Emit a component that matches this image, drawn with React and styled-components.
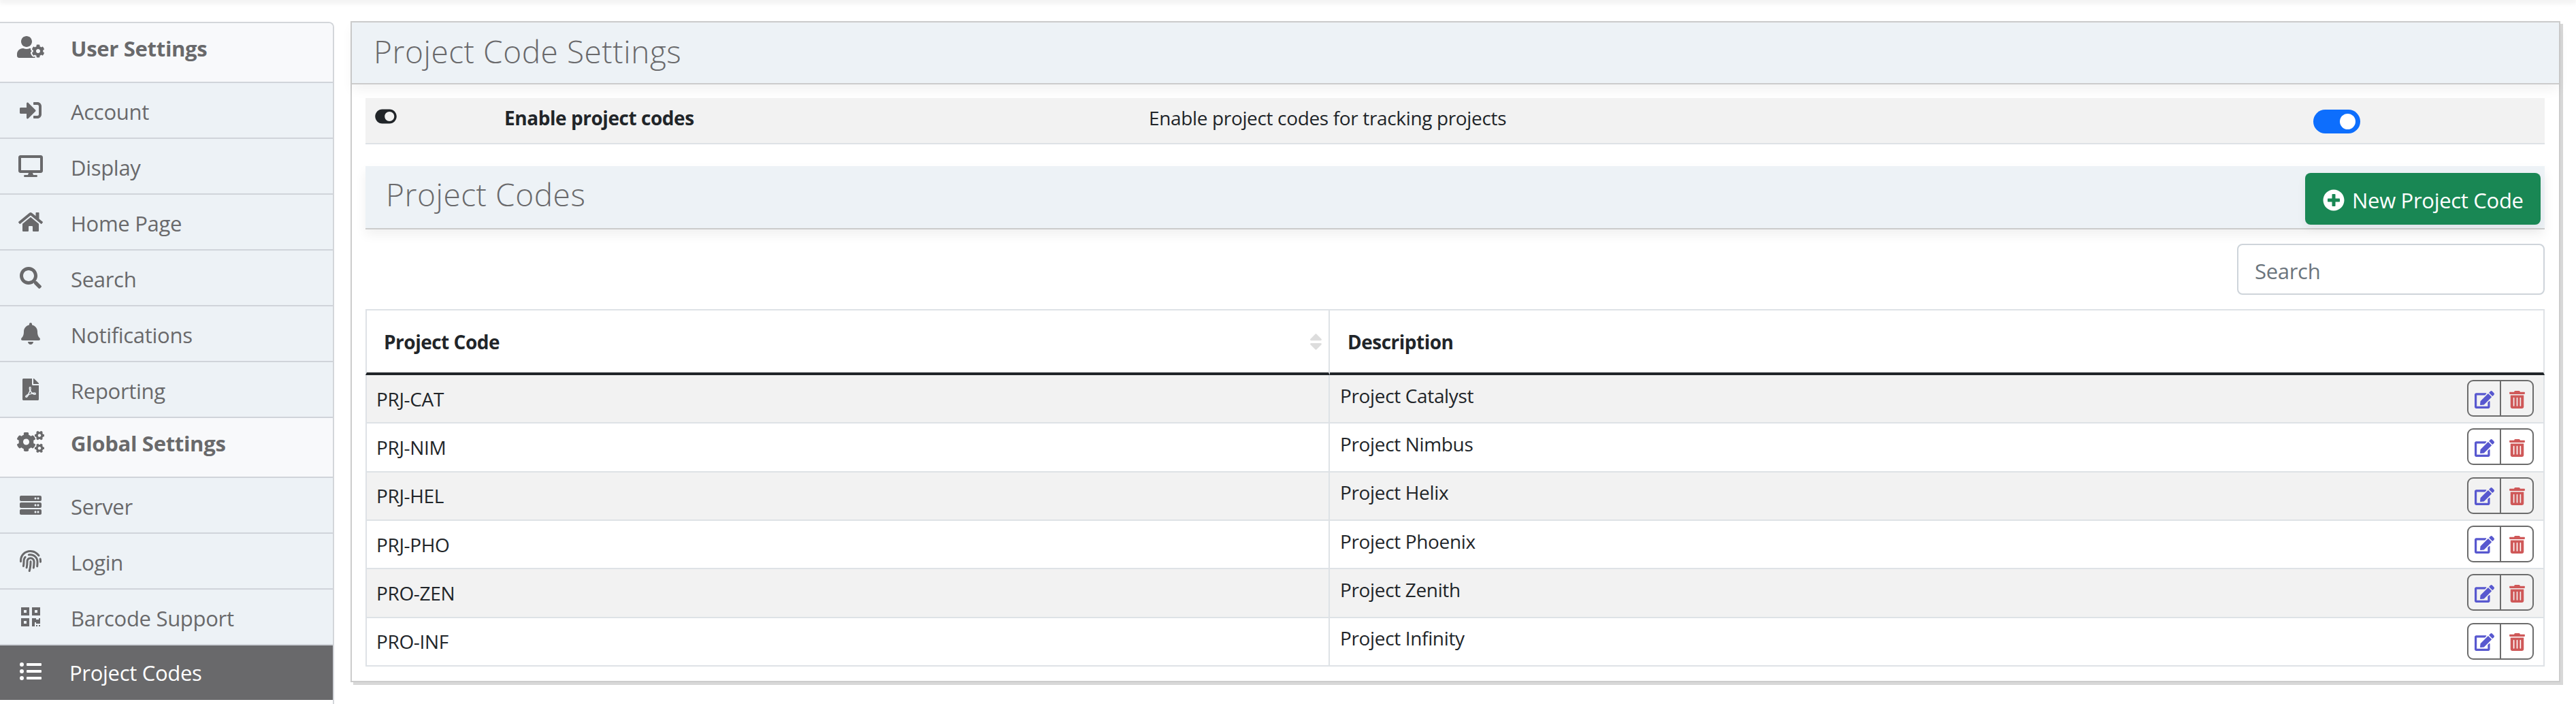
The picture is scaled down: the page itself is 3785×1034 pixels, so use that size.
import React from 'react'
import styled, { createGlobalStyle } from 'styled-components'
import {
    FaUserCog, FaSignInAlt, FaDesktop, FaHome, FaSearch, FaBell, FaFilePdf, FaCogs, FaServer,
    FaFingerprint, FaQrcode, FaListUl, FaToggleOn, FaPlusCircle, FaSort, FaEdit, FaTrashAlt,
} from 'react-icons/fa'

const GlobalStyle = createGlobalStyle`
    html, body {
        margin: 0;
        padding: 0;
        background: #fff;
        overflow: hidden;
    }
    body {
        font-family: "Open Sans", "Noto Sans", sans-serif;
        color: #212529;
    }
`

const Page = styled.div`
    width: 3785px;
    height: 1034px;
    overflow: hidden;
    position: relative;
    display: flex;
    flex-direction: column;
`

const TopShadow = styled.div`
    height: 0;
    flex: none;
    box-shadow: 0 0 10px 2px rgba(0, 0, 0, 0.14);
`

const Columns = styled.div`
    display: flex;
    align-items: flex-start;
    gap: 24px;
    padding-top: 32px;
`

const Sidebar = styled.nav`
    width: 491px;
    height: 1002px;
    flex: none;
    box-sizing: border-box;
    border-top: 2px solid #d3d6da;
    border-right: 2px solid #d3d6da;
    border-top-right-radius: 8px;
    overflow: hidden;
`

const SideRow = styled.div`
    display: flex;
    align-items: center;
    box-sizing: border-box;
    height: ${(p) => (p.$group ? 88 : p.$active ? 80 : 82)}px;
    padding-top: ${(p) => (p.$group || p.$active ? 0 : 4)}px;
    padding-bottom: ${(p) => (p.$group ? 12 : 0)}px;
    padding-left: 25px;
    background: ${(p) => (p.$active ? '#69696b' : p.$group ? '#f8f9fb' : '#edf2f6')};
    color: ${(p) => (p.$active ? '#fff' : '#69696b')};
    border-bottom: ${(p) => (p.$active ? 'none' : '2px solid #d0d4da')};
    font-size: 31px;
    letter-spacing: -0.3px;
    font-weight: ${(p) => (p.$group ? 700 : 400)};
`

const SideIcon = styled.span`
    display: flex;
    justify-content: center;
    width: 40px;
    margin-right: ${(p) => (p.$active ? 37 : 39)}px;
    flex: none;
    position: relative;
    top: -2px;
    svg {
        height: 32px;
        width: ${(p) => p.$width}px;
        flex: none;
    }
`

const Panel = styled.main`
    width: 3247px;
    flex: none;
    margin-top: -1px;
    box-sizing: border-box;
    border: 2px solid #cccccc;
    box-shadow: 4px 4px 0 #d8d8d8;
    background: #fff;
    padding-bottom: 21px;
`

const PanelHeader = styled.header`
    box-sizing: border-box;
    height: 91px;
    padding: 0 0 6px 32px;
    display: flex;
    align-items: center;
    background: #edf2f6;
    border-bottom: 2px solid #cccccc;
    box-shadow: 0 8px 16px rgba(0, 0, 0, 0.05);
    font-size: 46px;
    font-weight: 300;
    letter-spacing: 0.55px;
    color: #69696b;
`

const PanelBody = styled.div`
    padding: 20px 21px 0 20px;
`

const SettingRow = styled.div`
    display: grid;
    grid-template-columns: 190px 947px 1711px 1fr;
    align-items: center;
    box-sizing: border-box;
    height: 68px;
    padding-left: 14px;
    padding-bottom: 8px;
    background: #f2f2f2;
    border-bottom: 2px solid #dee2e6;
    font-size: 28px;
    letter-spacing: -0.35px;
`

const SettingIcon = styled.span`
    display: flex;
    position: relative;
    top: -2px;
    svg {
        height: 28px;
        width: 32px;
    }
`

const SettingName = styled.strong`
    font-weight: 700;
    letter-spacing: -0.45px;
`

const Switch = styled.span`
    display: block;
    position: relative;
    width: 69px;
    height: 35px;
    border-radius: 18px;
    background: #0d6efd;
    top: 5px;
    &::after {
        content: '';
        position: absolute;
        top: 6px;
        right: 7px;
        width: 23px;
        height: 23px;
        border-radius: 50%;
        background: #fff;
    }
`

const SectionHeader = styled.div`
    box-sizing: border-box;
    height: 93px;
    margin-top: 32px;
    padding: 10px 6px 0 30px;
    display: flex;
    align-items: flex-start;
    justify-content: space-between;
    background: #edf2f6;
    border-bottom: 2px solid #cccccc;
    box-shadow: 0 8px 16px rgba(0, 0, 0, 0.06);
`

const SectionTitle = styled.h2`
    margin: 0;
    font-size: 46px;
    line-height: 62px;
    font-weight: 300;
    letter-spacing: 0.55px;
    color: #69696b;
`

const NewButton = styled.button`
    display: flex;
    align-items: center;
    gap: 11px;
    box-sizing: border-box;
    width: 346px;
    height: 76px;
    padding: 3px 0 0 26px;
    border: none;
    border-radius: 8px;
    background: #198754;
    color: #fff;
    font-family: inherit;
    font-size: 31px;
    letter-spacing: -0.3px;
    box-shadow: 0 6px 14px rgba(0, 0, 0, 0.06);
    svg {
        width: 32px;
        height: 32px;
        flex: none;
    }
`

const SearchRow = styled.div`
    display: flex;
    justify-content: flex-end;
    margin: 21px 0;
`

const SearchInput = styled.input`
    box-sizing: border-box;
    width: 452px;
    height: 75px;
    padding: 5px 24px 0;
    border: 2px solid #ced4da;
    border-radius: 8px;
    font-family: inherit;
    font-size: 31px;
    letter-spacing: -0.3px;
    &::placeholder {
        color: #6c757d;
        opacity: 1;
    }
`

const Table = styled.table`
    width: 100%;
    table-layout: fixed;
    border-collapse: separate;
    border-spacing: 0;
    border-top: 2px solid #dee2e6;
    font-size: 28px;
    letter-spacing: -0.35px;
`

const HeadCell = styled.th`
    position: relative;
    box-sizing: border-box;
    height: 95px;
    width: ${(p) => p.$width || 'auto'};
    padding: 0 26px 0 ${(p) => (p.$first ? 25 : 26)}px;
    text-align: left;
    font-weight: 700;
    letter-spacing: -0.5px;
    border-bottom: 4px solid #212529;
    border-left: ${(p) => (p.$first ? '2px solid #dee2e6' : 'none')};
    border-right: 2px solid #dee2e6;
`

const SortIcon = styled(FaSort)`
    position: absolute;
    right: 9px;
    top: 31px;
    height: 30px;
    width: 19px;
    color: #dddddd;
`

const Row = styled.tr`
    background: ${(p) => (p.$striped ? '#f2f2f2' : '#fff')};
`

const Cell = styled.td`
    position: relative;
    box-sizing: border-box;
    height: 71.33px;
    padding: 0 14px ${(p) => (p.$raised ? 10 : 0)}px ${(p) => (p.$raised ? 15 : 14)}px;
    border-bottom: 2px solid #dee2e6;
    border-left: ${(p) => (p.$first ? '2px solid #dee2e6' : 'none')};
    border-right: 2px solid #dee2e6;
`

const Actions = styled.div`
    position: absolute;
    right: 14px;
    top: 7px;
    display: flex;
    width: 98px;
    height: 54px;
    box-sizing: border-box;
    border: 2px solid #6c6c6c;
    border-radius: 9px;
    overflow: hidden;
`

const ActionButton = styled.span`
    flex: 1;
    display: flex;
    align-items: center;
    justify-content: center;
    padding-top: 3px;
    color: ${(p) => p.$color};
    border-left: ${(p) => (p.$divided ? '2px solid #6c6c6c' : 'none')};
    svg {
        height: 26px;
        width: ${(p) => p.$width}px;
        flex: none;
    }
`

const menu = [
    { label: 'User Settings', icon: FaUserCog, width: 40, group: true },
    { label: 'Account', icon: FaSignInAlt, width: 32 },
    { label: 'Display', icon: FaDesktop, width: 36 },
    { label: 'Home Page', icon: FaHome, width: 36 },
    { label: 'Search', icon: FaSearch, width: 32 },
    { label: 'Notifications', icon: FaBell, width: 28 },
    { label: 'Reporting', icon: FaFilePdf, width: 24 },
    { label: 'Global Settings', icon: FaCogs, width: 40, group: true },
    { label: 'Server', icon: FaServer, width: 32 },
    { label: 'Login', icon: FaFingerprint, width: 32 },
    { label: 'Barcode Support', icon: FaQrcode, width: 28 },
    { label: 'Project Codes', icon: FaListUl, width: 32, active: true },
]

const codes = [
    ['PRJ-CAT', 'Project Catalyst'],
    ['PRJ-NIM', 'Project Nimbus'],
    ['PRJ-HEL', 'Project Helix'],
    ['PRJ-PHO', 'Project Phoenix'],
    ['PRO-ZEN', 'Project Zenith'],
    ['PRO-INF', 'Project Infinity'],
]

const App = () => (
    <Page>
        <GlobalStyle />
        <TopShadow />
        <Columns>
            <Sidebar>
                {menu.map(({ label, icon: Icon, width, group, active }) => (
                    <SideRow key={label} $group={group} $active={active}>
                        <SideIcon $active={active} $width={width}><Icon /></SideIcon>
                        {label}
                    </SideRow>
                ))}
            </Sidebar>
            <Panel>
                <PanelHeader>Project Code Settings</PanelHeader>
                <PanelBody>
                    <SettingRow>
                        <SettingIcon><FaToggleOn /></SettingIcon>
                        <SettingName>Enable project codes</SettingName>
                        <span>Enable project codes for tracking projects</span>
                        <Switch />
                    </SettingRow>
                    <SectionHeader>
                        <SectionTitle>Project Codes</SectionTitle>
                        <NewButton><FaPlusCircle />New Project Code</NewButton>
                    </SectionHeader>
                    <SearchRow>
                        <SearchInput placeholder="Search" />
                    </SearchRow>
                    <Table>
                        <thead>
                            <tr>
                                <HeadCell $first $width="1417px">Project Code<SortIcon /></HeadCell>
                                <HeadCell>Description</HeadCell>
                            </tr>
                        </thead>
                        <tbody>
                            {codes.map(([code, description], i) => (
                                <Row key={code} $striped={i % 2 === 0}>
                                    <Cell $first>{code}</Cell>
                                    <Cell $raised>
                                        {description}
                                        <Actions>
                                            <ActionButton $color="#5858cf" $width={29}><FaEdit /></ActionButton>
                                            <ActionButton $color="#cf5858" $width={23} $divided><FaTrashAlt /></ActionButton>
                                        </Actions>
                                    </Cell>
                                </Row>
                            ))}
                        </tbody>
                    </Table>
                </PanelBody>
            </Panel>
        </Columns>
    </Page>
)

export default App
